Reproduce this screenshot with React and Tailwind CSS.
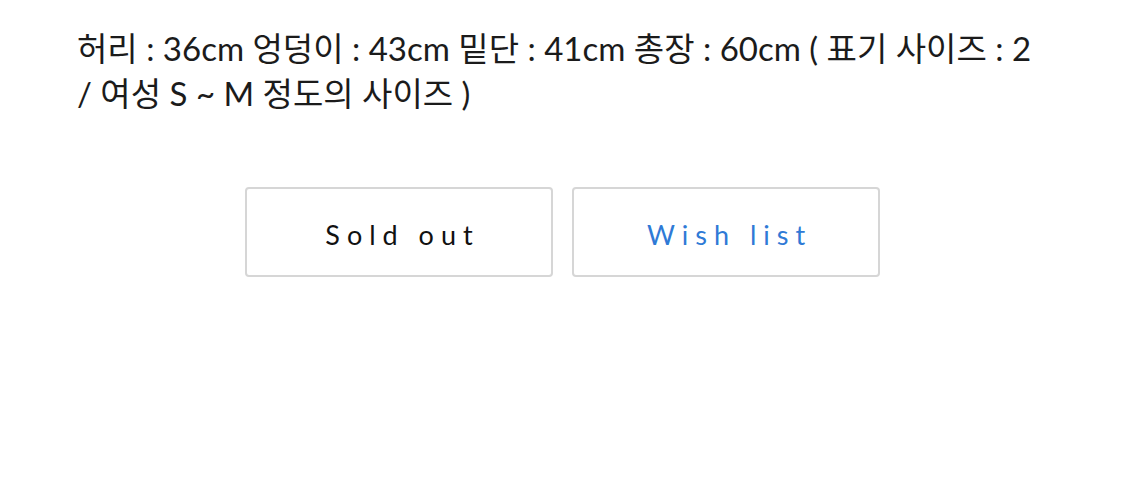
export default function App() {
  return (
    <div className="min-h-[489px] bg-white font-['Lato','Noto_Sans_CJK_KR',sans-serif]">
      <div className="whitespace-nowrap pl-[77px] pt-[26px] text-[33px] leading-[45px] text-[#1b1b1b]">
        허리 : 36cm 엉덩이 : 43cm 밑단 : 41cm 총장 : 60cm ( 표기 사이즈 : 2
        <br />/ 여성 S ~ M 정도의 사이즈 )
      </div>
      <div className="mt-[71px] flex justify-center gap-[19px]">
        <button className="h-[90px] w-[308px] rounded-[4px] border-2 border-[#d6d6d6] bg-white pl-[7px] pt-[6px] text-[27px] tracking-[7px] text-[#111]">
          Sold out
        </button>
        <button className="h-[90px] w-[308px] rounded-[4px] border-2 border-[#d6d6d6] bg-white pl-[7px] pt-[6px] text-[27px] tracking-[7px] text-[#2f7ad6]">
          Wish list
        </button>
      </div>
    </div>
  );
}
